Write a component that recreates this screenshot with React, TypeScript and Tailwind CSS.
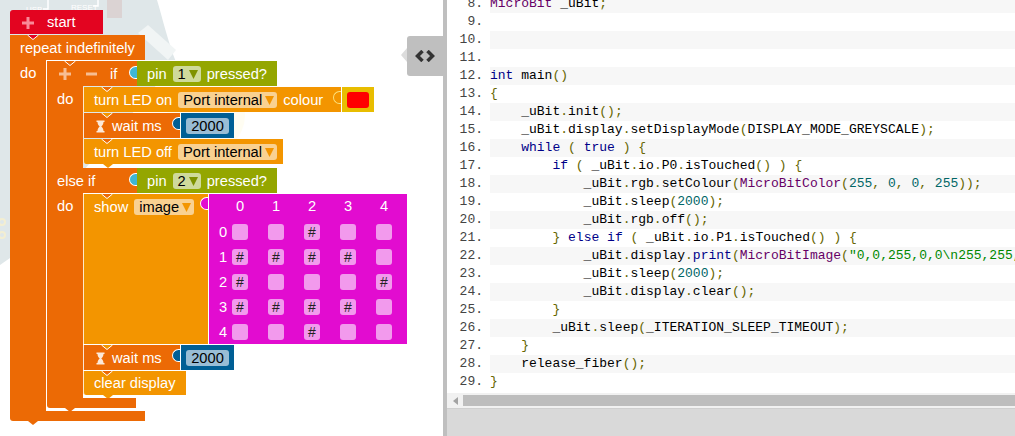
import type { ReactNode } from 'react';

const tokenStyles = {
    kw: 'text-[#000088]',
    type: 'text-[#660066]',
    num: 'text-[#006666]',
    str: 'text-[#008800]',
    pun: 'text-[#666600]',
};

const codeLines: [number, string][] = [
    [8, 'MicroBit _uBit;'],
    [9, ''],
    [10, ''],
    [11, ''],
    [12, 'int main()'],
    [13, '{'],
    [14, '    _uBit.init();'],
    [15, '    _uBit.display.setDisplayMode(DISPLAY_MODE_GREYSCALE);'],
    [16, '    while ( true ) {'],
    [17, '        if ( _uBit.io.P0.isTouched() ) {'],
    [18, '            _uBit.rgb.setColour(MicroBitColor(255, 0, 0, 255));'],
    [19, '            _uBit.sleep(2000);'],
    [20, '            _uBit.rgb.off();'],
    [21, '        } else if ( _uBit.io.P1.isTouched() ) {'],
    [22, '            _uBit.display.print(MicroBitImage("0,0,255,0,0\\n255,255,255,255,0\\n255,0,0,0,255\\n255,255,255,255,0\\n0,0,255,0,0\\n"));'],
    [23, '            _uBit.sleep(2000);'],
    [24, '            _uBit.display.clear();'],
    [25, '        }'],
    [26, '        _uBit.sleep(_ITERATION_SLEEP_TIMEOUT);'],
    [27, '    }'],
    [28, '    release_fiber();'],
    [29, '}'],
];

const imageRows = ['..#..', '####.', '#...#', '####.', '..#..'];

function highlight(line: string) {
    const parts = line.split(/("[^"]*"|\b(?:int|while|true|if|else|print)\b|\bMicroBit\w*\b|\b\d+\b|[(){}.;,])/);
    return parts.map((part, i) => {
        let cls = '';
        if (part.startsWith('"')) cls = tokenStyles.str;
        else if (/^(int|while|true|if|else|print)$/.test(part)) cls = tokenStyles.kw;
        else if (part.startsWith('MicroBit')) cls = tokenStyles.type;
        else if (/^\d+$/.test(part)) cls = tokenStyles.num;
        else if (/^[(){}.;,]$/.test(part)) cls = tokenStyles.pun;
        return <span key={i} className={cls}>{part}</span>;
    });
}

function Notch({ className }: { className: string }) {
    return (
        <svg className={`absolute left-[17px] top-0 ${className}`} width="12" height="5" viewBox="0 0 12 5">
            <path d="M0.5 0L6 4.5L11.5 0" stroke="#ffffff" strokeWidth="1" />
        </svg>
    );
}

function Tip({ className, fill }: { className: string; fill: string }) {
    return (
        <svg className={`absolute ${className}`} width="12" height="4" viewBox="0 0 12 4">
            <path d="M1 0L6 4L11 0Z" fill={fill} />
        </svg>
    );
}

function Tab({ className }: { className: string }) {
    return <span className={`absolute right-0 h-[13px] w-[8px] rounded-l-full border border-r-0 ${className}`} />;
}

function Plus({ color }: { color: string }) {
    return (
        <svg width="12" height="12" viewBox="0 0 12 12">
            <path d="M4.5 0h3v4.5H12v3H7.5V12h-3V7.5H0v-3h4.5z" fill={color} />
        </svg>
    );
}

function Minus() {
    return (
        <svg width="11" height="12" viewBox="0 0 11 12">
            <rect x="0" y="4.5" width="11" height="3" fill="#f7bd92" />
        </svg>
    );
}

function Arrow({ color }: { color: string }) {
    return (
        <svg className="ml-[3px]" width="9" height="9" viewBox="0 0 9 9">
            <path d="M0 0H9L4.5 9Z" fill={color} />
        </svg>
    );
}

function Field({ label, className, arrow }: { label: string; className: string; arrow: string }) {
    return (
        <span className={`flex h-4 items-center rounded-[3px] pl-[5px] pr-[3px] text-black ${className}`}>
            {label}
            <Arrow color={arrow} />
        </span>
    );
}

function PinBlock({ pin }: { pin: string }) {
    return (
        <div className="flex h-[25px] w-[140px] items-center bg-[#94a600] pl-[10px] pt-px text-white">
            pin
            <span className="ml-[6px]">
                <Field label={pin} className="bg-[#cfda9b]" arrow="#7f9200" />
            </span>
            <span className="ml-[6px]">pressed?</span>
        </div>
    );
}

function Hourglass() {
    return (
        <svg className="mr-[7px]" width="9" height="13" viewBox="0 0 9 13">
            <path d="M0.5 0.5h8v1.5h-1c0 2.5-1.2 3.5-2.2 4.5 1 1 2.2 2 2.2 4.5h1v1.5h-8V11h1c0-2.5 1.2-3.5 2.2-4.5-1-1-2.2-2-2.2-4.5h-1z" fill="#ffffff" fillOpacity="0.85" />
        </svg>
    );
}

function WaitBlock() {
    return (
        <div className="flex gap-px">
            <div className="relative flex h-[25px] w-[97px] items-center border-l border-[#fbe6d6] bg-[#ec6a05] pl-[12px] pt-px text-white">
                <Notch className="fill-[#f39500]" />
                <Hourglass />
                wait ms
                <Tab className="top-[4px] border-white bg-[#005f95]" />
            </div>
            <div className="flex h-[25px] w-[53px] items-center justify-center bg-[#005f95] pt-px">
                <span className="flex h-4 w-[43px] items-center justify-center rounded-[3px] bg-[#99bdd5] text-black">2000</span>
            </div>
        </div>
    );
}

function Statement({ className, children }: { className: string; children: ReactNode }) {
    return (
        <div className={`relative flex items-center border-l border-[#fdeacb] bg-[#f39500] pl-[10px] pt-px text-white ${className}`}>
            {children}
        </div>
    );
}

function Spine({ label, className }: { label: string; className: string }) {
    return <div className={`w-[36px] bg-[#ec6a05] pl-[10px] text-white ${className}`}>{label}</div>;
}

function ImageGrid() {
    return (
        <div className="grid h-[150px] w-[198px] grid-cols-[23px_repeat(5,36px)] grid-rows-[repeat(6,25px)] bg-[#e20cd0] pt-px text-white">
            <span />
            {[0, 1, 2, 3, 4].map((n) => (
                <span key={n} className="flex w-4 items-center justify-center pb-[2px]">{n}</span>
            ))}
            {imageRows.map((row, r) => [
                <span key={`r${r}`} className="flex items-center justify-center pb-[1px] pl-[5px]">{r}</span>,
                ...row.split('').map((cell, c) => (
                    <span key={`${r}-${c}`} className="mt-[4px] flex h-4 w-4 items-center justify-center rounded-[3px] bg-[#f29aed] text-[14px] text-[#222222]">
                        {cell === '#' ? '#' : ''}
                    </span>
                )),
            ])}
        </div>
    );
}

function BoardBackdrop() {
    return (
        <svg className="absolute inset-0" width="443" height="436" viewBox="0 0 443 436">
            <path d="M0 0H157C163 20 168 42 176 62L84 170L10 258L0 265Z" fill="#dfe7e9" />
            <path d="M138 33L148 25L176 50L168 60Z" fill="#f1f5f5" />
            <rect x="107" y="0" width="15" height="18" fill="#dbd3d3" />
            <circle cx="206" cy="115" r="39" fill="#fffdf2" />
            <circle cx="2" cy="222" r="3" fill="none" stroke="#f3eed2" strokeWidth="2" />
            <circle cx="2" cy="235" r="3" fill="none" stroke="#f3eed2" strokeWidth="2" />
            <path d="M43 9H48V0M93 6H98V0" fill="none" stroke="#ffffff" strokeWidth="1.5" />
            <text x="26" y="12" fontSize="8" fill="#ffffff">USB</text>
            <text x="71" y="10" fontSize="8" fill="#ffffff">RESET</text>
        </svg>
    );
}

function Workspace() {
    return (
        <div className="relative h-full w-[443px] shrink-0 overflow-hidden whitespace-nowrap bg-white text-[14.67px] leading-none">
            <BoardBackdrop />

            <div className="relative flex flex-col pl-[10px] pt-[10px]">
                <div className="mb-px flex h-[24px] w-[93px] items-center rounded-tl-[3px] bg-[#e30420] pl-[12px] pt-px text-white">
                    <Plus color="#f98a98" />
                    <span className="ml-[13px]">start</span>
                </div>

                <div className="relative flex h-[25px] w-[135px] items-center bg-[#ec6a05] pl-[10px] pt-px text-white">
                    <Notch className="fill-[#e30420]" />
                    repeat indefinitely
                </div>

                <div className="flex h-[351px]">
                    <Spine label="do" className="pt-[6px]" />

                    <div className="flex h-[348px] flex-col border-l border-white">
                        <div className="flex border-t border-white">
                            <div className="relative flex h-[25px] w-[90px] items-center bg-[#ec6a05] pl-[12px] pt-px text-white">
                                <Notch className="fill-[#ec6a05]" />
                                <Plus color="#f7bd92" />
                                <span className="ml-[15px]"><Minus /></span>
                                <span className="ml-[13px]">if</span>
                                <Tab className="top-[5px] border-white bg-[#3fb6d4]" />
                            </div>
                            <PinBlock pin="1" />
                        </div>

                        <div className="flex h-[82px]">
                            <Spine label="do" className="pt-[6px]" />
                            <div className="flex flex-col gap-px pt-px">
                                <div className="flex gap-px">
                                    <Statement className="h-[25px] w-[258px]">
                                        <Notch className="fill-[#ec6a05]" />
                                        turn LED on
                                        <span className="ml-[6px]"><Field label="Port internal" className="bg-[#f9d191]" arrow="#f39500" /></span>
                                        <span className="ml-[6px]">colour</span>
                                        <Tab className="top-[4px] border-[#fbe27e] bg-[#f39500]" />
                                    </Statement>
                                    <div className="flex h-[25px] w-[32px] items-center justify-center bg-[#e8bd00]">
                                        <span className="h-4 w-[22px] rounded-[3px] bg-[#ff0000]" />
                                    </div>
                                </div>
                                <WaitBlock />
                                <Statement className="h-[25px] w-[200px] rounded-bl-[3px]">
                                    <Notch className="fill-[#ec6a05]" />
                                    turn LED off
                                    <span className="ml-[6px]"><Field label="Port internal" className="bg-[#f9d191]" arrow="#f39500" /></span>
                                    <Tip className="left-[18px] top-full" fill="#f39500" />
                                </Statement>
                            </div>
                        </div>

                        <div className="flex">
                            <div className="relative flex h-[25px] w-[90px] items-center bg-[#ec6a05] pl-[10px] pt-px text-white">
                                else if
                                <Tab className="top-[5px] border-white bg-[#3fb6d4]" />
                            </div>
                            <PinBlock pin="2" />
                        </div>

                        <div className="flex h-[205px]">
                            <Spine label="do" className="pt-[6px]" />
                            <div className="flex flex-col gap-px pt-px">
                                <div className="flex gap-px">
                                    <div className="relative flex h-[150px] w-[125px] items-start border-l border-[#fdeacb] bg-[#f39500] pl-[10px] pt-[5px] text-white">
                                        <Notch className="fill-[#ec6a05]" />
                                        <span className="flex h-4 items-center">show</span>
                                        <span className="ml-[6px]"><Field label="image" className="bg-[#f9d191]" arrow="#f39500" /></span>
                                        <Tab className="top-[3px] border-white bg-[#e20cd0]" />
                                    </div>
                                    <ImageGrid />
                                </div>
                                <WaitBlock />
                                <Statement className="h-[24px] w-[103px] rounded-bl-[3px]">
                                    <Notch className="fill-[#ec6a05]" />
                                    clear display
                                    <Tip className="left-[18px] top-full" fill="#f39500" />
                                </Statement>
                            </div>
                        </div>

                        <div className="relative h-[10px] w-[89px] rounded-bl-[3px] bg-[#ec6a05]">
                            <Tip className="left-[17px] top-full" fill="#ec6a05" />
                        </div>
                    </div>
                </div>

                <div className="relative h-[10px] w-[135px] rounded-bl-[3px] bg-[#ec6a05]">
                    <Tip className="left-[17px] top-full" fill="#ec6a05" />
                </div>
            </div>

            <div className="absolute right-0 top-[36px] flex h-[40px] w-[36px] items-center justify-center rounded-l-[3px] bg-[#bfbfbf]">
                <svg className="absolute -left-[6px] top-[12px]" width="6" height="14" viewBox="0 0 6 14">
                    <path d="M6 0V14L0 7Z" fill="#dcdcdc" />
                </svg>
                <svg width="20" height="12" viewBox="0 0 20 12">
                    <path d="M7.5 1L2.5 6L7.5 11M12.5 1L17.5 6L12.5 11" fill="none" stroke="#333333" strokeWidth="3.5" />
                </svg>
            </div>
        </div>
    );
}

function CodePanel() {
    return (
        <div className="flex h-full min-w-0 flex-1 flex-col bg-white">
            <div className="h-[393px] overflow-hidden font-['Liberation_Mono',monospace] text-[13px] leading-[18px]">
                <div className="-mt-[5px]">
                    {codeLines.map(([num, text]) => (
                        <div key={num} className="flex h-[18px]">
                            <span className="w-[43px] shrink-0 pr-[7px] text-right text-[#444444]">{num}.</span>
                            <span className={`flex-1 whitespace-pre text-black ${num % 2 === 0 ? 'bg-[#f7f7f7]' : ''}`}>
                                {highlight(text)}
                            </span>
                        </div>
                    ))}
                </div>
            </div>
            <div className="flex h-[15px] items-stretch bg-[#f1f1f1] pb-[2px] pt-[2px]">
                <span className="flex w-[16px] items-center justify-center">
                    <svg width="5" height="8" viewBox="0 0 5 8"><path d="M5 0V8L0 4Z" fill="#a3a3a3" /></svg>
                </span>
                <span className="flex-1 bg-[#bdbdbd]" />
            </div>
            <div className="flex-1 border-t border-[#cfcfcf] bg-[#d9d9d9]" />
        </div>
    );
}

export default function App() {
    return (
        <div className="flex h-[436px] w-[1015px] overflow-hidden bg-white font-['Liberation_Sans',Arial,sans-serif]">
            <Workspace />
            <div className="h-full w-[4px] shrink-0 bg-[#bfbfbf]" />
            <CodePanel />
        </div>
    );
}
